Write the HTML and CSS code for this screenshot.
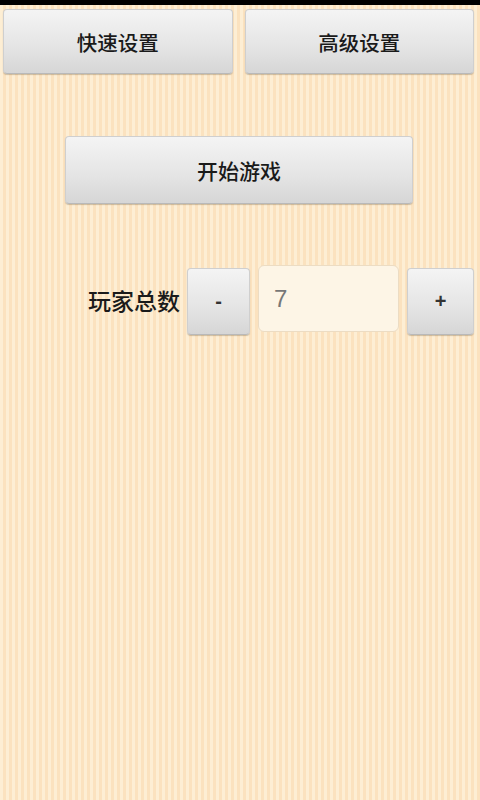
FILE: index.html
```html
<!DOCTYPE html>
<html>
<head>
<meta charset="utf-8">
<link rel="stylesheet" href="styles.css">
</head>
<body>
<div class="statusbar"></div>
<div class="screen">
  <div class="toprow">
    <button class="btn top-btn">快速设置</button>
    <button class="btn top-btn">高级设置</button>
  </div>
  <div class="startrow">
    <button class="btn start-btn">开始游戏</button>
  </div>
  <div class="playerrow">
    <span class="label">玩家总数</span>
    <button class="btn small-btn">-</button>
    <div class="numbox">7</div>
    <button class="btn small-btn plus">+</button>
  </div>
</div>
</body>
</html>
```
FILE: styles.css
```css
html, body {
  margin: 0;
  padding: 0;
  width: 480px;
  height: 800px;
  overflow: hidden;
}
body {
  font-family: "Noto Sans CJK SC", "Liberation Sans", sans-serif;
  background: repeating-linear-gradient(90deg, #fdeed4 0px, #fdeed4 3px, #fbe2bf 3px, #fbe2bf 6px);
}
.statusbar {
  height: 5px;
  background: #000;
}
.screen {
  display: flex;
  flex-direction: column;
}
.btn {
  font-family: inherit;
  color: #1a1a1a;
  background: linear-gradient(#f4f4f4, #e4e4e4 60%, #d6d6d6);
  border: 1px solid #cfcfcf;
  border-bottom-color: #b9b9b9;
  border-radius: 4px;
  box-shadow: 0 1px 1px rgba(120, 100, 70, 0.35);
  padding: 0;
  margin: 0;
  font-weight: 500;
}
.toprow {
  display: flex;
  gap: 12px;
  padding: 4px 6px 0 3px;
}
.top-btn {
  flex: 1;
  height: 65px;
  font-size: 20.5px;
}
.startrow {
  padding: 62px 0 0 65px;
}
.start-btn {
  width: 348px;
  height: 68px;
  font-size: 21px;
}
.playerrow {
  display: flex;
  align-items: center;
  padding: 64px 0 0 0;
}
.label {
  width: 187px;
  text-align: right;
  font-size: 23px;
  font-weight: 500;
  color: #1a1a1a;
  padding-right: 7px;
  box-sizing: border-box;
  margin-top: -4px;
}
.small-btn {
  width: 63px;
  height: 67px;
  font-size: 20px;
  font-family: "Liberation Sans", sans-serif;
  font-weight: bold;
  color: #333;
}
.numbox {
  width: 141px;
  height: 67px;
  margin: -6px 8px 0 8px;
  box-sizing: border-box;
  background: #fdf5e6;
  border: 1px solid #ecdcc3;
  border-radius: 6px;
  font-family: "Liberation Sans", sans-serif;
  font-size: 24px;
  color: #777;
  display: flex;
  align-items: center;
  padding-left: 15px;
}
.plus {
  width: 67px;
}
```
